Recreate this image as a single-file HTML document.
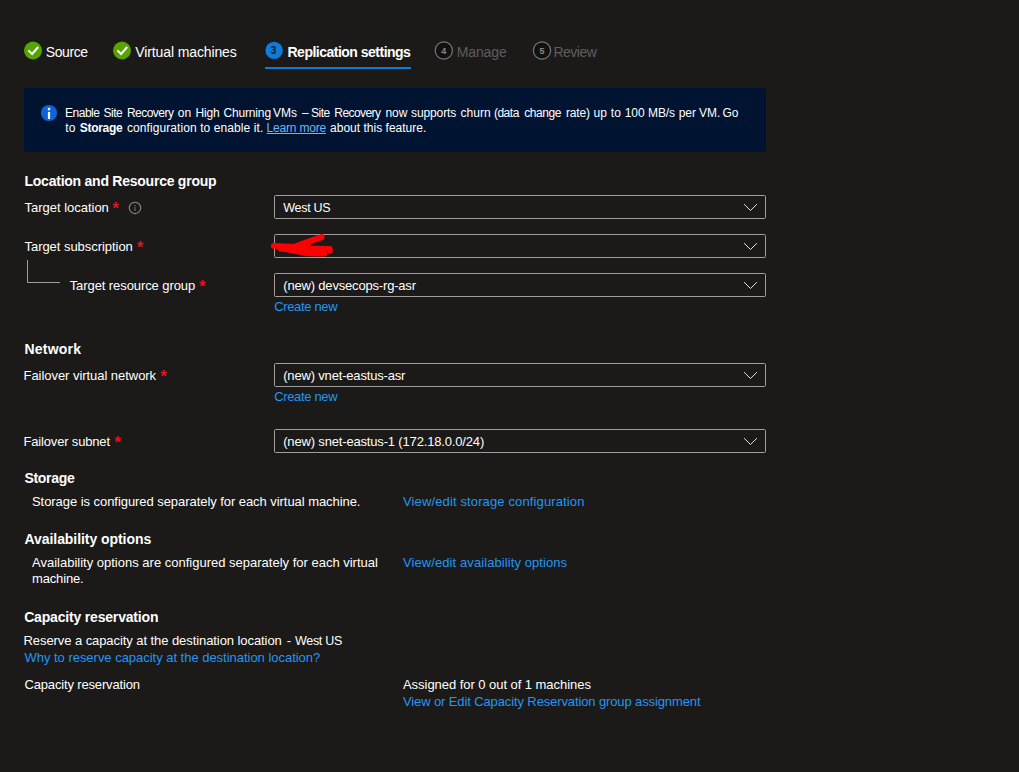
<!DOCTYPE html>
<html lang="en"><head><meta charset="utf-8"><title>Replication settings</title>
<style>
html,body{margin:0;padding:0}
body{width:1019px;height:772px;background:#1b1a19;position:relative;overflow:hidden;font-family:"Liberation Sans",sans-serif;color:#fff}
.t{position:absolute;white-space:pre;line-height:16px}
.s12{font-size:12px}.s13{font-size:13px}.s14{font-size:14px}
.b{font-weight:700}
.u{text-decoration:underline}
.box{position:absolute;left:274px;width:490px;height:22px;border:1px solid #a19f9d;border-radius:1.5px}
.banner{position:absolute;left:24px;top:88px;width:742px;height:64px;background:#001432;border-radius:2px}
.req{position:absolute;color:#e81123;font-size:16px;font-weight:700;line-height:16px;white-space:pre}
.num{position:absolute;font-size:9px;line-height:12px;font-weight:700;white-space:pre;text-align:center;width:18px}
svg{position:absolute;left:0;top:0}
</style></head>
<body>
<div class="banner"></div>
<div class="box" style="top:195px"></div>
<div class="box" style="top:234px"></div>
<div class="box" style="top:273px"></div>
<div class="box" style="top:363px"></div>
<div class="box" style="top:429px"></div>
<svg width="1019" height="772" viewBox="0 0 1019 772">
<circle cx="33" cy="50.5" r="9" fill="#57a300"/>
<polyline points="28.4,50.4 32.1,54.0 38.2,47.0" fill="none" stroke="#fff" stroke-width="2"/>
<circle cx="122" cy="50.5" r="9" fill="#57a300"/>
<polyline points="117.4,50.4 121.1,54.0 127.2,47.0" fill="none" stroke="#fff" stroke-width="2"/>
<circle cx="274.1" cy="50.4" r="8.7" fill="#0c7bd9"/>
<rect x="265" y="67" width="146" height="2" fill="#0c7bd9"/>
<circle cx="443.8" cy="50.5" r="8.6" fill="#121110" stroke="#7a7876" stroke-width="1.2"/>
<circle cx="542" cy="50.5" r="8.6" fill="#121110" stroke="#7a7876" stroke-width="1.2"/>
<circle cx="49" cy="113" r="8.1" fill="#0f64d7"/>
<circle cx="49" cy="109.1" r="1.3" fill="#fff"/><rect x="47.9" y="111.9" width="2.2" height="7.1" fill="#fff"/>
<circle cx="135" cy="207.9" r="5.7" fill="none" stroke="#8a8886" stroke-width="1.1"/>
<rect x="134.3" y="204.9" width="1.4" height="1.3" fill="#605e5c"/><rect x="134.3" y="207" width="1.4" height="4" fill="#605e5c"/>
<polyline points="744.1,204.2 750.5,210.5 756.9,204.2" fill="none" stroke="#e6e4e2" stroke-width="1"/>
<polyline points="744.1,243.2 750.5,249.5 756.9,243.2" fill="none" stroke="#e6e4e2" stroke-width="1"/>
<polyline points="744.1,282.2 750.5,288.5 756.9,282.2" fill="none" stroke="#e6e4e2" stroke-width="1"/>
<polyline points="744.1,372.2 750.5,378.5 756.9,372.2" fill="none" stroke="#e6e4e2" stroke-width="1"/>
<polyline points="744.1,438.2 750.5,444.5 756.9,438.2" fill="none" stroke="#e6e4e2" stroke-width="1"/>
<path d="M27.5 260 V282.5 H60" fill="none" stroke="#a19f9d" stroke-width="1"/>
<g fill="none" stroke="#ff0000" stroke-linecap="round" stroke-linejoin="round"><path d="M273.8 245.8 L284 246.3 L297 246.8" stroke-width="5.8"/><path d="M280.5 248.6 L296 250.4" stroke-width="6"/><path d="M299 245 L310 241.2 L321.6 237.2" stroke-width="6"/><path d="M300 249.4 L316 248.4 L330 248.7 L330.2 251.2" stroke-width="5.2"/><path d="M292 250.6 L308 253.4 L324.5 253.7" stroke-width="5.6"/><path d="M296 246.2 L308 243.6" stroke-width="6"/></g>
</svg>
<span class="num" style="left:264.6px;top:45px;color:#1b1a19;font-size:10px">3</span>
<span class="num" style="left:434.8px;top:44.5px;color:#8a8886">4</span>
<span class="num" style="left:533px;top:44.5px;color:#8a8886">5</span>
<span class="req" style="left:112.4px;top:201px">*</span>
<span class="req" style="left:136.9px;top:240px">*</span>
<span class="req" style="left:199.3px;top:279px">*</span>
<span class="req" style="left:160.4px;top:369px">*</span>
<span class="req" style="left:114.6px;top:435px">*</span>
<span class="t s14" style="left:45.8px;top:44px;letter-spacing:-0.434px;">Source</span>
<span class="t s14" style="left:135.3px;top:44px;letter-spacing:-0.116px;">Virtual machines</span>
<span class="t s14 b" style="left:287.5px;top:44px;letter-spacing:-0.507px;">Replication settings</span>
<span class="t s14" style="left:456.7px;top:44px;letter-spacing:-0.101px;color:#605e5c;">Manage</span>
<span class="t s14" style="left:553.45px;top:44px;letter-spacing:-0.5px;color:#605e5c;">Review</span>
<span class="t s12" style="left:65.05px;top:105px;letter-spacing:-0.5px;">Enable</span>
<span class="t s12" style="left:103.55px;top:105px;letter-spacing:-0.5px;">Site</span>
<span class="t s12" style="left:126.9px;top:105px;letter-spacing:-0.512px;">Recovery</span>
<span class="t s12" style="left:177.86px;top:105px;">on</span>
<span class="t s12" style="left:195.5px;top:105px;letter-spacing:-0.135px;">High</span>
<span class="t s12" style="left:223.4px;top:105px;letter-spacing:-0.146px;">Churning</span>
<span class="t s12" style="left:273.1px;top:105px;">VMs</span>
<span class="t s12" style="left:302.05px;top:105px;">–</span>
<span class="t s12" style="left:311.05px;top:105px;letter-spacing:-0.5px;">Site</span>
<span class="t s12" style="left:334.3px;top:105px;letter-spacing:-0.569px;">Recovery</span>
<span class="t s12" style="left:385.38px;top:105px;">now</span>
<span class="t s12" style="left:411.0px;top:105px;letter-spacing:-0.104px;">supports</span>
<span class="t s12" style="left:460.4px;top:105px;letter-spacing:0.064px;">churn</span>
<span class="t s12" style="left:493.96px;top:105px;letter-spacing:-0.5px;">(data</span>
<span class="t s12" style="left:524.3px;top:105px;letter-spacing:-0.459px;">change</span>
<span class="t s12" style="left:566.1px;top:105px;letter-spacing:-0.219px;">rate)</span>
<span class="t s12" style="left:593.46px;top:105px;">up</span>
<span class="t s12" style="left:610.83px;top:105px;">to</span>
<span class="t s12" style="left:624.63px;top:105px;">100</span>
<span class="t s12" style="left:648.0px;top:105px;letter-spacing:-0.111px;">MB/s</span>
<span class="t s12" style="left:678.68px;top:105px;">per</span>
<span class="t s12" style="left:698.95px;top:105px;">VM.</span>
<span class="t s12" style="left:722.53px;top:105px;">Go</span>
<span class="t s12" style="left:65.33px;top:120px;">to</span>
<span class="t s12 b" style="left:79.8px;top:120px;letter-spacing:-0.301px;">Storage</span>
<span class="t s12" style="left:126.9px;top:120px;letter-spacing:0.09px;">configuration to enable it.</span>
<span class="t s12 u" style="left:266.6px;top:120px;letter-spacing:-0.199px;color:#6cb8f6;">Learn more</span>
<span class="t s12" style="left:330.0px;top:120px;letter-spacing:0.015px;">about this feature.</span>
<span class="t s14 b" style="left:24.5px;top:173px;letter-spacing:-0.242px;">Location and Resource group</span>
<span class="t s13" style="left:24.5px;top:200px;letter-spacing:-0.016px;">Target location</span>
<span class="t s13" style="left:24.5px;top:239px;letter-spacing:-0.043px;">Target subscription</span>
<span class="t s13" style="left:69.7px;top:278px;letter-spacing:-0.083px;">Target resource group</span>
<span class="t" style="left:283.2px;top:200px;font-size:12.5px;letter-spacing:-0.275px;">West US</span>
<span class="t s13" style="left:283.3px;top:278px;letter-spacing:-0.182px;">(new) devsecops-rg-asr</span>
<span class="t s13" style="left:274.2px;top:299px;letter-spacing:-0.343px;color:#2296f5;">Create new</span>
<span class="t s14 b" style="left:24.5px;top:341px;letter-spacing:0.209px;">Network</span>
<span class="t s13" style="left:23.5px;top:368px;letter-spacing:-0.046px;">Failover virtual network</span>
<span class="t s13" style="left:283.2px;top:368px;letter-spacing:-0.174px;">(new) vnet-eastus-asr</span>
<span class="t s13" style="left:274.2px;top:389px;letter-spacing:-0.343px;color:#2296f5;">Create new</span>
<span class="t s13" style="left:23.5px;top:434px;letter-spacing:-0.169px;">Failover subnet</span>
<span class="t s13" style="left:283.2px;top:434px;letter-spacing:-0.166px;">(new) snet-eastus-1 (172.18.0.0/24)</span>
<span class="t s14 b" style="left:24.5px;top:470px;letter-spacing:-0.323px;">Storage</span>
<span class="t s13" style="left:32.0px;top:494px;letter-spacing:-0.056px;">Storage is configured separately for each virtual machine.</span>
<span class="t s13" style="left:403.0px;top:494px;letter-spacing:0.13px;color:#2296f5;">View/edit storage configuration</span>
<span class="t s14 b" style="left:24.5px;top:531px;letter-spacing:-0.06px;">Availability options</span>
<span class="t s13" style="left:32.0px;top:555px;">Availability options are configured separately for each virtual</span>
<span class="t s13" style="left:32.0px;top:571px;letter-spacing:-0.148px;">machine.</span>
<span class="t s13" style="left:403.0px;top:555px;letter-spacing:0.085px;color:#2296f5;">View/edit availability options</span>
<span class="t s14 b" style="left:24.2px;top:609px;letter-spacing:-0.183px;">Capacity reservation</span>
<span class="t s13" style="left:23.5px;top:633px;letter-spacing:-0.073px;">Reserve a capacity at the destination location</span>
<span class="t s13" style="left:286.7px;top:633px;">-</span>
<span class="t" style="left:295.0px;top:633px;font-size:12.5px;letter-spacing:-0.308px;">West US</span>
<span class="t s13" style="left:24.5px;top:650px;letter-spacing:-0.025px;color:#2296f5;">Why to reserve capacity at the destination location?</span>
<span class="t s13" style="left:24.5px;top:677px;letter-spacing:-0.161px;">Capacity reservation</span>
<span class="t s13" style="left:403.0px;top:677px;letter-spacing:-0.046px;">Assigned for 0 out of 1 machines</span>
<span class="t s13" style="left:403.0px;top:694px;letter-spacing:-0.117px;color:#2296f5;">View or Edit Capacity Reservation group assignment</span>
</body></html>
